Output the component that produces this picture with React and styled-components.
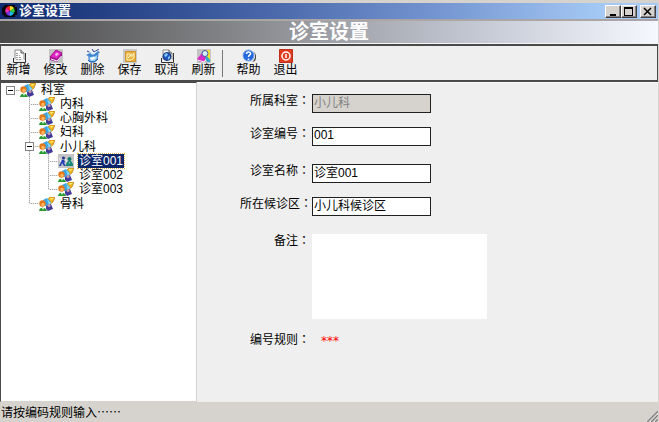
import React, { useState } from "react";
import styled, { createGlobalStyle, css } from "styled-components";

const Global = createGlobalStyle`
  *, *::before, *::after { box-sizing: border-box; }
  body {
    margin: 0;
    background: #d6d3ce;
    color: #000;
    font: 12px/14px "Liberation Sans", "Noto Sans CJK SC", sans-serif;
  }
  button, input, textarea { font: inherit; color: inherit; margin: 0; border-radius: 0; }
`;

const Window = styled.div`
  display: flex;
  flex-direction: column;
  min-height: 100vh;
  padding: 3px 1px 0 0;
  background: #d6d3ce;
`;

const TitleBar = styled.header`
  display: flex;
  align-items: center;
  gap: 2px;
  height: 16px;
  padding: 0 2px;
  background: linear-gradient(90deg, #0f2a70, #3c5a9e 33%, #7394d0 66%, #a6caf5 92%);
`;

const Caption = styled.span`
  flex: 1;
  color: #fff;
  font-size: 13px;
  font-weight: 700;
`;

const CaptionGroup = styled.div`
  display: flex;
`;

const CaptionButton = styled.button`
  display: grid;
  place-items: center;
  width: 16px;
  height: 13px;
  padding: 0;
  border: 1px solid;
  border-color: #fff #404040 #404040 #fff;
  box-shadow: inset -1px -1px 0 #848284;
  background: #d6d3ce;
`;

const CloseSlot = styled(CaptionGroup)`
  margin-left: 1px;
`;

const Banner = styled.h1`
  height: 25px;
  margin: 0;
  border-top: 2px solid #aaa6a6;
  border-bottom: 1px solid #f4f4f4;
  background: linear-gradient(90deg, #484848, #808184 33%, #c0c4cf 70%, #f6f8ff);
  color: #fff;
  font-family: "Noto Sans CJK SC", sans-serif;
  font-size: 20px;
  line-height: 20px;
  text-align: center;
`;

const Toolbar = styled.nav`
  display: flex;
  align-items: center;
  height: 38px;
  border: solid #4a4a4a;
  border-width: 2px 1px 2px 0;
  box-shadow: inset 1px 0 0 #4a4a4a;
  background: #efefef;
`;

const ToolButton = styled.button`
  display: flex;
  flex-direction: column;
  align-items: center;
  width: 37px;
  padding: 0;
  border: 0;
  background: none;
  white-space: nowrap;
  &:active { background: #dcdcdc; }
`;

const Separator = styled.span`
  width: 1px;
  height: 27px;
  margin-right: 7px;
  background: #777;
`;

const Body = styled.main`
  display: flex;
  flex: 1;
`;

const TreePane = styled.ul`
  flex: 0 0 197px;
  margin: 0;
  padding: 0;
  border: 1px solid;
  border-color: #4a4a4a #d6d3ce #d6d3ce #4a4a4a;
  background: #fff;
  list-style: none;
`;

const TreeRow = styled.li`
  display: flex;
  align-items: flex-end;
  height: ${(p) => (p.$roomy ? 15 : 14)}px;
`;

const vertical = "repeating-linear-gradient(180deg, #a8a8a8 0 1px, #e0e0e0 1px 2px)";
const horizontal = "repeating-linear-gradient(90deg, #a8a8a8 0 1px, #e0e0e0 1px 2px)";
const guides = {
  blank: "",
  line: css`background: ${vertical} 9px 0 / 1px 100% no-repeat;`,
  tee: css`background: ${vertical} 9px 0 / 1px 100% no-repeat, ${horizontal} 9px 7px / 10px 1px no-repeat;`,
  elbow: css`background: ${vertical} 9px 0 / 1px 8px no-repeat, ${horizontal} 9px 7px / 10px 1px no-repeat;`,
  root: css`background: ${horizontal} 9px 7px / 10px 1px no-repeat;`,
};

const Guide = styled.span`
  display: grid;
  place-items: center;
  width: 19px;
  height: 100%;
  ${(p) => guides[p.$kind]}
`;

const Expander = styled.button`
  display: grid;
  place-items: center;
  width: 9px;
  height: 9px;
  padding: 0;
  border: 1px solid #848284;
  background: #fff;
`;

const NodeLabel = styled.button`
  height: 14px;
  margin-left: 4px;
  padding: 0 1px;
  border: 0;
  background: ${(p) => (p.$selected ? "#0a246a" : "transparent")};
  color: ${(p) => (p.$selected ? "#fff" : "#000")};
  outline: ${(p) => (p.$selected ? "1px dotted #e0b050" : "none")};
  line-height: 14px;
`;

const FormPane = styled.form`
  display: flex;
  flex: 1;
  flex-direction: column;
  gap: 18px;
  padding: 11px 16px 16px 33px;
  border-top: 1px solid #fafafa;
  background: #efefef;
`;

const FieldGroup = styled.div`
  display: flex;
  flex-direction: column;
  gap: 14px;
`;

const Field = styled.div`
  display: flex;
  align-items: flex-start;
`;

const Label = styled.label`
  flex: 0 0 82px;
  padding-right: ${(p) => (p.$flush ? 0 : 2)}px;
  text-align: right;
  white-space: nowrap;
`;

const Colon = styled.span`
  font-family: "Liberation Sans", "Noto Sans CJK TC", sans-serif;
`;

const TextInput = styled.input`
  width: 119px;
  height: 19px;
  padding: 0 1px 4px;
  border: 1px solid #202020;
  outline: 0;
  background: #fff;
  line-height: 14px;
  &:disabled { background: #d6d3ce; color: #848284; }
`;

const Remarks = styled.textarea`
  width: 175px;
  height: 85px;
  padding: 2px;
  border: 0;
  outline: 0;
  background: #fff;
  resize: none;
`;

const Rule = styled.output`
  padding-left: 9px;
  color: #f00;
  font-family: "DejaVu Sans", sans-serif;
  line-height: 16px;
`;

const StatusBar = styled.footer`
  display: flex;
  align-items: center;
  justify-content: space-between;
  height: 20px;
  padding-left: 1px;
  font-family: "Noto Sans CJK SC", sans-serif;
`;

const Grip = styled.svg`
  align-self: flex-end;
`;

function Svg({ children, w = 14, h = 14, box = "0 0 14 14" }) {
  return <svg width={w} height={h} viewBox={box} aria-hidden="true">{children}</svg>;
}

function Logo() {
  return (
    <Svg w={15} h={14} box="0 0 15 14">
      <path d="M3 1H13V3H15V11H13V13H3L0 10V4Z" fill="#080808" />
      <path d="M8 7V2A5 5 0 0 0 4 4Z" fill="#f22" />
      <path d="M8 7L4 4A5 5 0 0 0 4 9Z" fill="#f52bb4" />
      <path d="M8 7L4 9A5 5 0 0 0 8 12Z" fill="#753be8" />
      <path d="M8 7V12A5 5 0 0 0 12 9Z" fill="#18bce8" />
      <path d="M8 7L12 9A5 5 0 0 0 12 4Z" fill="#31cf45" />
      <path d="M8 7L12 4A5 5 0 0 0 8 2Z" fill="#ffe02b" />
    </Svg>
  );
}

const Page = () => (
  <>
    <path d="M3 11V1H9L12 4V11" fill="#fff" stroke="#8a8a8a" />
    <path d="M9 1V4H12" fill="#ddd" stroke="#555" />
    <path d="M1.5 9V13.5H13.5V4" fill="none" stroke="#333" />
    <path d="M2 10H12V13H2Z" fill="#eee" />
  </>
);

const toolIcons = {
  add: (
    <Svg>
      <Page />
      <path d="M4 4.5H7M4 6.5H8M4 8.5H10M4 10.5H10" stroke="#999" strokeDasharray="2 1" />
    </Svg>
  ),
  edit: (
    <Svg>
      <path d="M0 0H14V14H0Z" fill="#c4c4c4" />
      <path d="M1 8L7 1L13 4L8 10Z" fill="#e322c8" stroke="#a0108c" />
      <path d="M1 8L8 10L13 4V7L8 13L1 11Z" fill="#a01090" />
      <path d="M2 10L8 12L12.5 7" fill="none" stroke="#fff" />
      <path d="M6 5L8 3.5L10 5L7 7.5Z" fill="#f7b0e8" />
    </Svg>
  ),
  remove: (
    <Svg>
      <path d="M3 7L12 5L11 11L8 13L3 12Z" fill="#9bd2f8" stroke="#3978c8" />
      <path d="M0 6L4 4L7 6L12 2L14 3L10 7L4 8Z" fill="#4087d0" />
      <path d="M1 2L5 4M6 0L8 3L13 0" fill="none" stroke="#283c90" />
      <path d="M3 3L7 5L11 2" fill="none" stroke="#d8f0ff" />
      <path d="M4 9L8 8L10 9L6 11Z" fill="#fff" />
      <path d="M2 11L4 13H8L12 10" fill="none" stroke="#205ab0" />
    </Svg>
  ),
  save: (
    <Svg>
      <path d="M0 0H14V14H0Z" fill="#c9c9c9" />
      <path d="M2.5 2.5H12.5V12.5H2.5Z" fill="#eab13e" stroke="#d3952b" />
      <path d="M4 5H7V7H10V5L11 4V9L8 11H4Z" fill="none" stroke="#fff0b8" />
      <path d="M5 9L9 5" stroke="#fffbe8" />
    </Svg>
  ),
  cancel: (
    <Svg>
      <Page />
      <circle cx="7" cy="7.5" r="4" fill="#2254ba" stroke="#173883" />
      <path d="M4 6L6 4L8 5L7 7L5 8ZM8 8L10 7V9L8 11Z" fill="#7fc4f4" />
    </Svg>
  ),
  refresh: (
    <Svg>
      <path d="M0 0H14V14H0Z" fill="#c4c4c4" />
      <path d="M0 10L5 4L11 7L7 13H3Z" fill="#dc29c5" />
      <path d="M1 11L7 13L10 9" fill="none" stroke="#fff" />
      <path d="M9 1H13V10H10L8 7L11 5Z" fill="#f4e52c" />
      <circle cx="8" cy="4.5" r="3" fill="#d0f1fb" stroke="#4c4ca0" />
      <path d="M10 7L13 11V13H10L8 9Z" fill="#35a7cc" />
    </Svg>
  ),
  help: (
    <Svg>
      <path d="M11 2C14 5 14 10 10 13L13 12C15 8 14 4 11 2Z" fill="#444" />
      <circle cx="6.5" cy="6.5" r="5.5" fill="#2468dc" stroke="#7fa8e8" />
      <path d="M4.5 5C4.5 2 9 2.5 8.5 5C8.3 6 6.5 6 6.5 8M6.5 9.5V11" fill="none" stroke="#fff" strokeWidth="1.5" />
    </Svg>
  ),
  exit: (
    <Svg>
      <path d="M0.5 0.5H13.5V13.5H0.5Z" fill="#e33d20" stroke="#bd2f1c" />
      <circle cx="7" cy="7" r="4" fill="none" stroke="#fff" strokeWidth="1.5" />
      <path d="M7 5V9" stroke="#fff" strokeWidth="1.5" />
    </Svg>
  ),
};

function DepartmentIcon() {
  return (
    <Svg w={16} h={14} box="0 0 16 14">
      <path d="M8 3L11 0H16L14 5L10 8Z" fill="#f2b41c" stroke="#b87a18" strokeWidth=".7" />
      <path d="M11 1H15L12 3Z" fill="#ffec70" />
      <path d="M4 3L8 1L12 5L10 9L5 9Z" fill="#3ba6e6" />
      <path d="M8 2L12 6L10 8Z" fill="#8edbf8" />
      <path d="M7 9L12 7L14 12L9 14L7 12Z" fill="#443c98" />
      <circle cx="10" cy="8.5" r="1.5" fill="#c99aa8" />
      <circle cx="3.5" cy="6.5" r="3.2" fill="#e2781a" />
      <circle cx="4" cy="7.5" r="1.7" fill="#ffb860" />
      <path d="M0 14C0 9.5 7 9.5 8 14Z" fill="#279b30" />
      <path d="M3 11H5L4 13Z" fill="#e8ffe0" />
    </Svg>
  );
}

function RoomIcon() {
  return (
    <Svg w={16} h={14} box="0 0 16 14">
      <path d="M0 0H16V14H0Z" fill="#c4c4c4" />
      <circle cx="5.5" cy="4" r="1.5" fill="#1d2f9c" />
      <path d="M4 6H6L7 8L6 9L8 12H6L4 9L3 12H1L3 8Z" fill="#2440b8" />
      <path d="M1.5 4L2.5 8M7.5 5L9 8" stroke="#f0f4ff" />
      <circle cx="11.5" cy="5" r="2" fill="#147a70" />
      <path d="M8 12V10L10 7H13L15 10V12Z" fill="#18877a" />
      <path d="M11 8H12V10Z" fill="#c8f0e0" />
    </Svg>
  );
}

const tools = [
  ["add", "新增"], ["edit", "修改"], ["remove", "删除"],
  ["save", "保存"], ["cancel", "取消"], ["refresh", "刷新"],
];
const sideTools = [["help", "帮助"], ["exit", "退出"]];

const nodes = [
  { name: "科室", guides: ["root"], open: true },
  { name: "内科", guides: ["blank", "tee"] },
  { name: "心胸外科", guides: ["blank", "tee"] },
  { name: "妇科", guides: ["blank", "tee"] },
  { name: "小儿科", guides: ["blank", "tee"], open: true, roomy: true },
  { name: "诊室001", guides: ["blank", "line", "tee"], room: true },
  { name: "诊室002", guides: ["blank", "line", "tee"] },
  { name: "诊室003", guides: ["blank", "line", "elbow"] },
  { name: "骨科", guides: ["blank", "elbow"], roomy: true },
];

function Tool({ icon, text }) {
  return <ToolButton type="button">{toolIcons[icon]}{text}</ToolButton>;
}

function TreeNode({ node, selected, onSelect }) {
  const last = node.guides.length - 1;
  return (
    <TreeRow role="treeitem" aria-level={last + 1} aria-selected={selected} $roomy={node.roomy}>
      {node.guides.map((kind, i) => (
        <Guide key={i} $kind={kind}>
          {i === last && node.open && (
            <Expander type="button" aria-label={`折叠${node.name}`}>
              <Svg w={5} h={1} box="0 0 5 1"><path d="M0 0H5V1H0Z" fill="#000" /></Svg>
            </Expander>
          )}
        </Guide>
      ))}
      {node.room ? <RoomIcon /> : <DepartmentIcon />}
      <NodeLabel type="button" $selected={selected} onClick={onSelect}>{node.name}</NodeLabel>
    </TreeRow>
  );
}

function LabelText({ id, flush, children }) {
  return <Label htmlFor={id} $flush={flush}>{children}<Colon>：</Colon></Label>;
}

function TextField({ id, label, value, disabled, flush }) {
  return (
    <Field>
      <LabelText id={id} flush={flush}>{label}</LabelText>
      <TextInput id={id} defaultValue={value} disabled={disabled} />
    </Field>
  );
}

export default function App() {
  const [selected, setSelected] = useState("诊室001");
  return (
    <>
      <Global />
      <Window>
        <TitleBar>
          <Logo />
          <Caption>诊室设置</Caption>
          <CaptionGroup>
            <CaptionButton aria-label="最小化">
              <Svg w={10} h={9} box="0 0 10 9"><path d="M2 7H8V9H2Z" /></Svg>
            </CaptionButton>
            <CaptionButton aria-label="最大化">
              <Svg w={10} h={9} box="0 0 10 9"><path d="M0 0H9V9H0ZM1 2V8H8V2Z" fillRule="evenodd" /></Svg>
            </CaptionButton>
          </CaptionGroup>
          <CloseSlot>
            <CaptionButton aria-label="关闭">
              <Svg w={10} h={9} box="0 0 10 9"><path d="M1 1L8 8M8 1L1 8" stroke="#000" strokeWidth="1.5" /></Svg>
            </CaptionButton>
          </CloseSlot>
        </TitleBar>
        <Banner>诊室设置</Banner>
        <Toolbar>
          {tools.map(([icon, text]) => <Tool key={icon} icon={icon} text={text} />)}
          <Separator />
          {sideTools.map(([icon, text]) => <Tool key={icon} icon={icon} text={text} />)}
        </Toolbar>
        <Body>
          <TreePane role="tree" aria-label="科室">
            {nodes.map((node) => (
              <TreeNode
                key={node.name}
                node={node}
                selected={node.name === selected}
                onSelect={() => setSelected(node.name)}
              />
            ))}
          </TreePane>
          <FormPane>
            <FieldGroup>
              <TextField id="dept" label="所属科室" value="小儿科" disabled />
              <TextField id="code" label="诊室编号" value="001" />
            </FieldGroup>
            <FieldGroup>
              <TextField id="name" label="诊室名称" value="诊室001" />
              <TextField id="area" label="所在候诊区" value="小儿科候诊区" flush />
            </FieldGroup>
            <FieldGroup>
              <Field>
                <LabelText id="remarks">备注</LabelText>
                <Remarks id="remarks" />
              </Field>
              <Field>
                <LabelText id="rule">编号规则</LabelText>
                <Rule id="rule">***</Rule>
              </Field>
            </FieldGroup>
          </FormPane>
        </Body>
        <StatusBar>
          <span>请按编码规则输入……</span>
          <Grip width="12" height="12" viewBox="0 0 12 12" aria-hidden="true">
            <path d="M0 12L12 0M4 12L12 4M8 12L12 8" stroke="#fff" />
            <path d="M1 12L12 1M5 12L12 5M9 12L12 9" stroke="#848284" strokeWidth="1.5" />
          </Grip>
        </StatusBar>
      </Window>
    </>
  );
}
